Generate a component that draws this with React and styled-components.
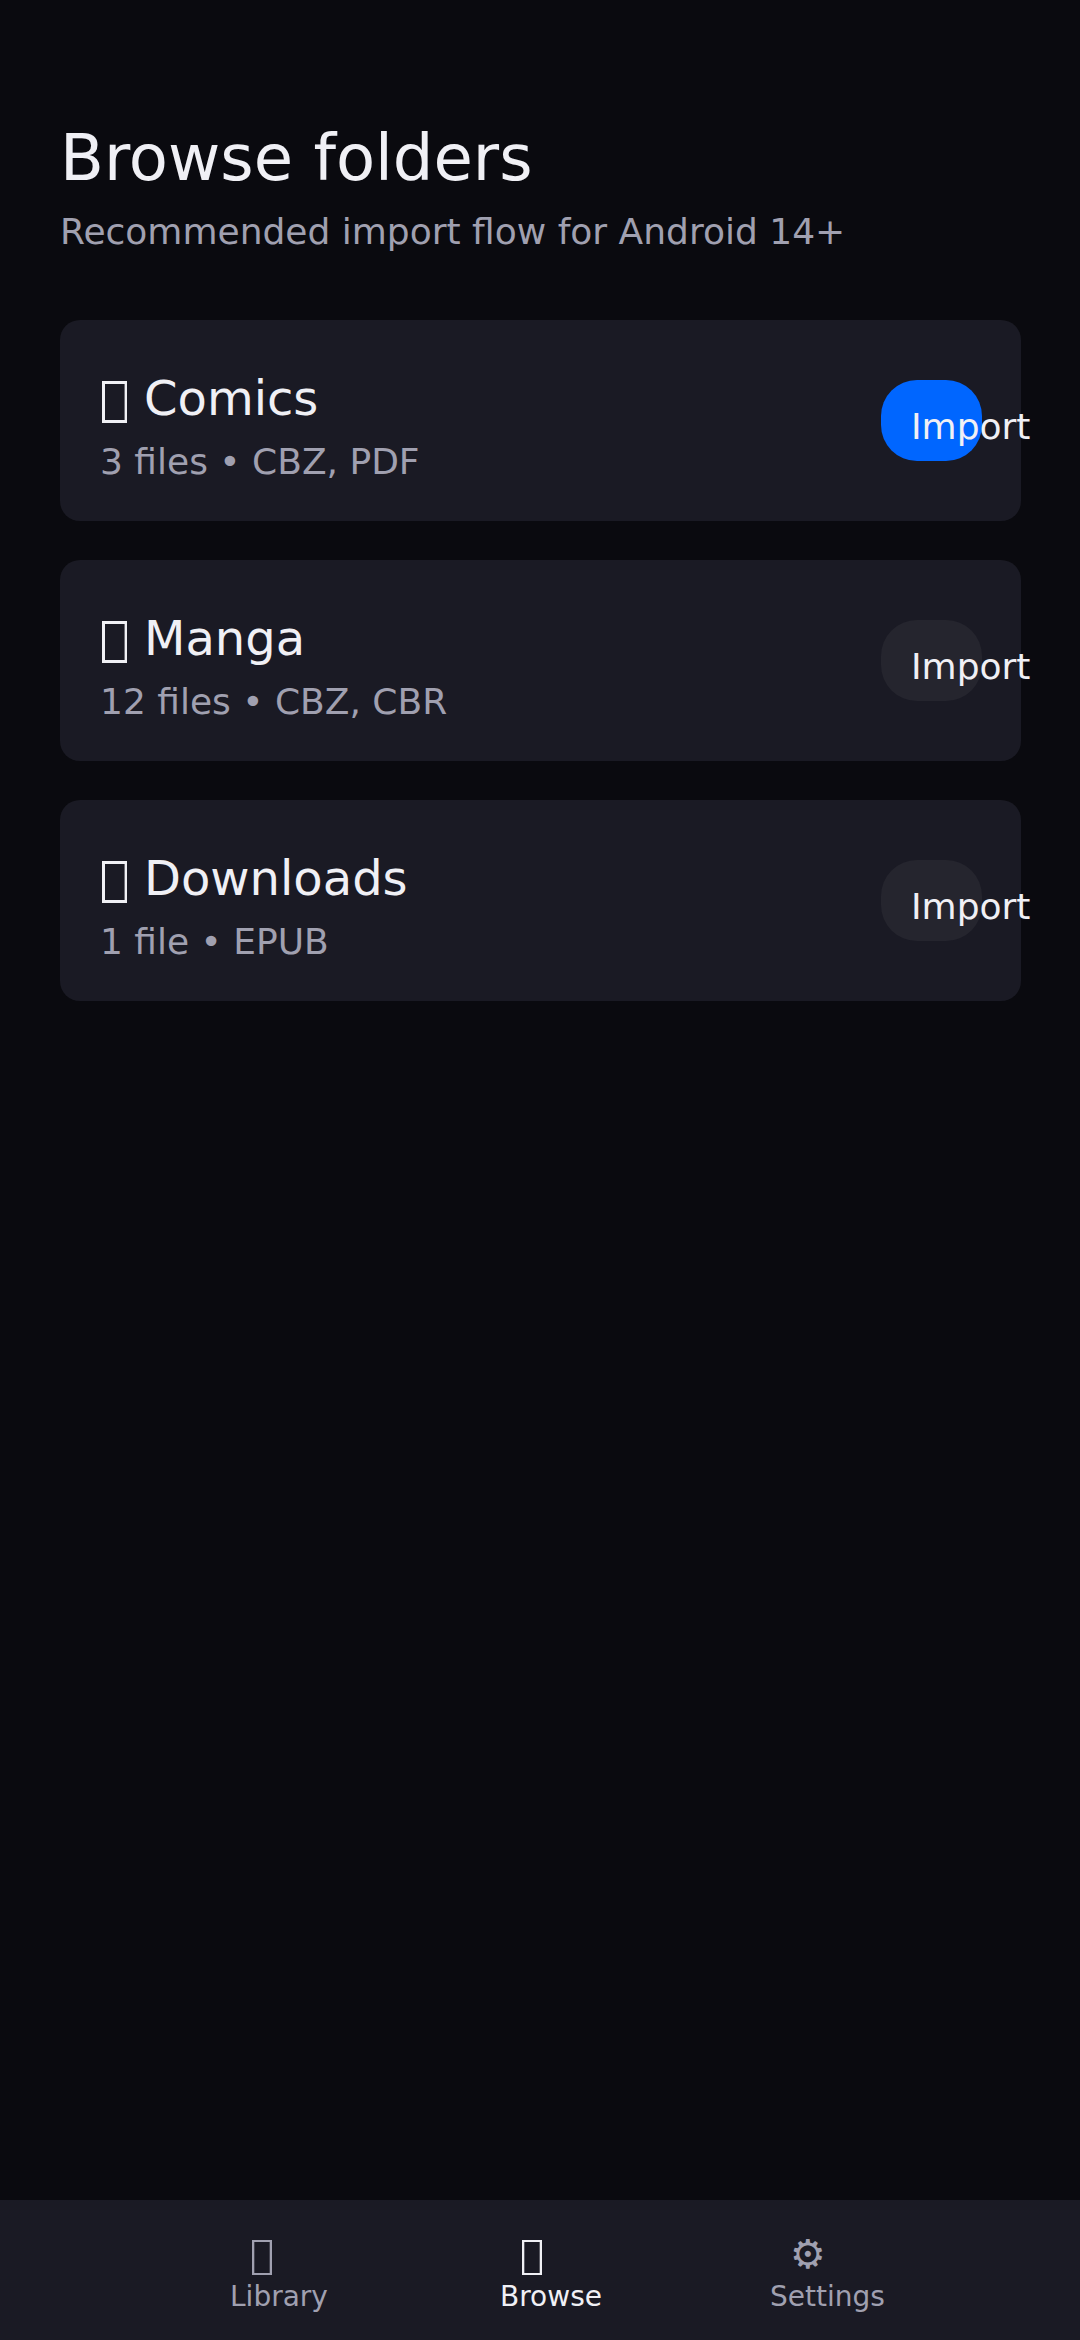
import React from 'react';
import styled, { createGlobalStyle } from 'styled-components';

const GlobalStyle = createGlobalStyle`
    * {
        box-sizing: border-box;
    }

    body {
        margin: 0;
        background: #0a0a0f;
        color: #f0f0f5;
        font-family: 'DejaVu Sans', sans-serif;
    }
`;

const Page = styled.div`
    display: flex;
    flex-direction: column;
    min-height: 100vh;
`;

const Content = styled.main`
    flex: 1;
    padding: 120px 59px 60px 60px;
`;

const Title = styled.h1`
    margin: 0 0 14px;
    font-size: 64px;
    font-weight: 400;
    line-height: 76px;
`;

const Subtitle = styled.p`
    margin: 0 0 66px;
    color: #a0a0b0;
    font-size: 36px;
    line-height: 44px;
`;

const FolderList = styled.ul`
    display: flex;
    flex-direction: column;
    gap: 39px;
    margin: 0;
    padding: 0;
    list-style: none;
`;

const FolderCard = styled.li`
    display: flex;
    align-items: center;
    justify-content: space-between;
    min-height: 201px;
    padding: 0 39px 0 40px;
    border-radius: 20px;
    background: #1a1a24;
`;

const FolderInfo = styled.div`
    padding-top: 13px;
`;

const FolderName = styled.h2`
    display: flex;
    gap: 15px;
    margin: 0 0 14px;
    font-size: 48px;
    font-weight: 400;
    line-height: 56px;
`;

const FolderMeta = styled.p`
    margin: 0;
    color: #a0a0b0;
    font-size: 36px;
    line-height: 44px;
`;

const ImportButton = styled.button`
    flex: none;
    width: 101px;
    padding: 25px 0 12px 30px;
    border: 0;
    border-radius: 36px;
    background: ${({ $primary }) => ($primary ? '#0066ff' : '#25252e')};
    color: #f0f0f5;
    font-family: inherit;
    font-size: 36px;
    line-height: 44px;
    text-align: left;
    white-space: nowrap;
    cursor: pointer;
`;

const NavBar = styled.nav`
    display: grid;
    grid-template-columns: repeat(3, 25%);
    justify-content: center;
    min-height: 140px;
    padding-top: 30px;
    background: #1a1a24;
`;

const NavLink = styled.a`
    padding-left: 95px;
    color: ${({ $active }) => ($active ? '#f0f0f5' : '#a0a0b0')};
    text-decoration: none;
`;

const NavIcon = styled.span`
    display: block;
    height: 48px;
    padding-left: 20px;
    font-size: 40px;
    line-height: 48px;
`;

const NavLabel = styled.span`
    display: block;
    font-size: 28px;
    line-height: 38px;
`;

const Glyph = styled.svg`
    display: block;
    flex: none;
    fill: currentColor;
    fill-rule: evenodd;
    shape-rendering: crispEdges;
`;

// hollow box used as the folder mark
const FolderGlyph = () => (
    <Glyph width="29" height="56" viewBox="0 0 29 56" aria-hidden="true">
        <path d="M2 11h25v42H2zM5 14v36h19V14z" />
        <path d="M24 14h1v36h-1z" fill="#1a1a24" fillOpacity="0.6" />
    </Glyph>
);

const TabGlyph = () => (
    <Glyph width="24" height="48" viewBox="0 0 24 48" aria-hidden="true">
        <path d="M2 10h20v35H2zM4 12v31h16V12z" />
        <path d="M4 12h1v31h-1zM19 12h1v31h-1z" fillOpacity="0.3" />
    </Glyph>
);

const folders = [
    { name: 'Comics', meta: '3 files • CBZ, PDF', primary: true },
    { name: 'Manga', meta: '12 files • CBZ, CBR' },
    { name: 'Downloads', meta: '1 file • EPUB' },
];

const tabs = [
    { label: 'Library', icon: <TabGlyph /> },
    { label: 'Browse', icon: <TabGlyph />, active: true },
    { label: 'Settings', icon: '⚙' },
];

const Folder = ({ name, meta, primary }) => {
    return (
        <FolderCard>
            <FolderInfo>
                <FolderName>
                    <FolderGlyph />
                    {name}
                </FolderName>
                <FolderMeta>{meta}</FolderMeta>
            </FolderInfo>
            <ImportButton type="button" $primary={primary}>Import</ImportButton>
        </FolderCard>
    );
};

function App() {
    return (
        <Page>
            <GlobalStyle />
            <Content>
                <Title>Browse folders</Title>
                <Subtitle>Recommended import flow for Android 14+</Subtitle>
                <FolderList>
                    {folders.map((folder) => (
                        <Folder key={folder.name} {...folder} />
                    ))}
                </FolderList>
            </Content>
            <NavBar>
                {tabs.map(({ label, icon, active }) => (
                    <NavLink key={label} href={`#${label.toLowerCase()}`} $active={active}>
                        <NavIcon aria-hidden="true">{icon}</NavIcon>
                        <NavLabel>{label}</NavLabel>
                    </NavLink>
                ))}
            </NavBar>
        </Page>
    );
}

export default App;
